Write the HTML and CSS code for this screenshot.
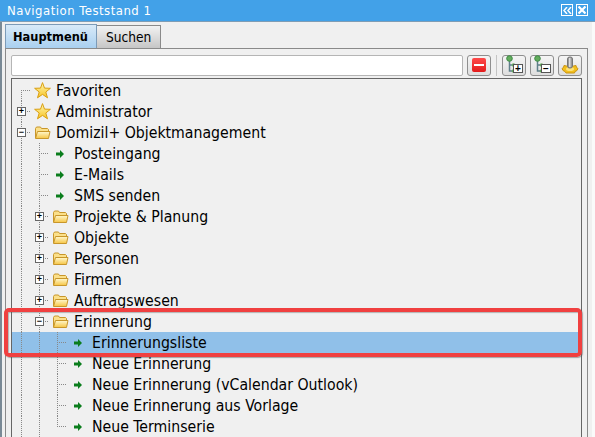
FILE: index.html
```html
<!DOCTYPE html>
<html lang="de">
<head>
    <meta charset="UTF-8">
    <title>Navigation Teststand 1</title>
    <link rel="stylesheet" href="styles.css">
</head>
<body>
    <svg class="defs" width="0" height="0">
        <defs>
            <linearGradient id="star-fill" x1="0" y1="0" x2="0" y2="1">
                <stop offset="0" stop-color="#fff6b0"/>
                <stop offset="1" stop-color="#f7c425"/>
            </linearGradient>
            <linearGradient id="folder-fill" x1="0" y1="0" x2="0" y2="1">
                <stop offset="0" stop-color="#fff8cf"/>
                <stop offset="1" stop-color="#f6c544"/>
            </linearGradient>
            <symbol id="star" viewBox="0 0 17 17">
                <path d="M8.5.6l2 5.500 5.900.2-4.600 3.700 1.700 5.800-5-3.400-5 3.400 1.700-5.800L.6 6.300l5.900-.2z" fill="url(#star-fill)" stroke="#d99f12"/>
            </symbol>
            <symbol id="folder" viewBox="0 0 17 15">
                <path d="M1.500 13V3.500l1-1.500h4l1 1.500h6l1 1V6" fill="#fbe08a" stroke="#c8962a"/>
                <path d="M1.500 13.500L3.500 6.500h12.500l-1.500 7z" fill="url(#folder-fill)" stroke="#c8962a"/>
            </symbol>
            <symbol id="arrow" viewBox="0 0 8 8">
                <path d="M0 2.500h4V0l4 4-4 4V5.500H0z" fill="#0a7d1c"/>
            </symbol>
            <symbol id="branch" viewBox="0 0 22 20">
                <path d="M6.500 5v11h4M6.500 10h4" fill="none" stroke="#5f7f8a" stroke-width="1.500"/>
                <circle cx="6.500" cy="3.500" r="2.800" fill="#63ad5d" stroke="#3e8a45"/>
                <circle cx="10.500" cy="10" r="1.800" fill="#63ad5d"/>
                <circle cx="10.500" cy="16" r="1.800" fill="#63ad5d"/>
            </symbol>
        </defs>
    </svg>

    <div class="window">
        <div class="titlebar">
            <span class="title">Navigation Teststand 1</span>
            <span class="title-btns">
                <span class="title-btn">
                    <svg width="9" height="7" viewBox="0 0 9 7"><path d="M4 0L1 3.500 4 7M8 0L5 3.500 8 7" fill="none" stroke="#fff" stroke-width="1.500"/></svg>
                </span>
                <span class="title-btn">
                    <svg width="8" height="8" viewBox="0 0 8 8"><path d="M.5.500l7 7M7.500.500l-7 7" fill="none" stroke="#fff" stroke-width="2.200"/></svg>
                </span>
            </span>
        </div>

        <div class="tabs">
            <div class="tab active">Hauptmenü</div>
            <div class="tab">Suchen</div>
        </div>

        <div class="panel">
            <div class="toolbar">
                <input class="search" type="text">
                <button class="tool">
                    <span class="red-minus"></span>
                </button>
                <span class="tool-sep"></span>
                <button class="tool">
                    <svg class="branch" width="22" height="20"><use href="#branch"/></svg>
                    <span class="mini-box">+</span>
                </button>
                <button class="tool">
                    <svg class="branch" width="22" height="20"><use href="#branch"/></svg>
                    <span class="mini-box">−</span>
                </button>
                <button class="tool">
                    <svg width="18" height="18" viewBox="0 0 18 18">
                        <path d="M1 12.500l1.500-1 .5-2 2.500.5L9 8.500l3.500 1.500 2.500-.5.5 2 1.500 1-1 2-2 1-.5 1.500H5l-1-1.500-2-1z" fill="#f3bf1c" stroke="#c99413"/>
                        <ellipse cx="9" cy="13" rx="4" ry="2" fill="#fbe27a"/>
                        <rect x="6.500" y="1" width="5" height="11" rx="2" fill="#9a9a9a" stroke="#777"/>
                        <rect x="8" y="2" width="1.500" height="9" fill="#ddd"/>
                    </svg>
                </button>
            </div>

            <div class="tree">
                <div class="row">
                    <span class="conn first"></span>
                    <svg class="star" width="17" height="17"><use href="#star"/></svg>
                    <span class="label">Favoriten</span>
                </div>
                <div class="row">
                    <span class="conn"><span class="exp">+</span></span>
                    <svg class="star" width="17" height="17"><use href="#star"/></svg>
                    <span class="label">Administrator</span>
                </div>
                <div class="row">
                    <span class="conn"><span class="exp">−</span></span>
                    <svg class="folder" width="17" height="15"><use href="#folder"/></svg>
                    <span class="label">Domizil+ Objektmanagement</span>
                </div>
                <div class="row">
                    <span class="ind"></span><span class="conn leaf"></span>
                    <svg class="arrow" width="8" height="8"><use href="#arrow"/></svg>
                    <span class="label">Posteingang</span>
                </div>
                <div class="row">
                    <span class="ind"></span><span class="conn leaf"></span>
                    <svg class="arrow" width="8" height="8"><use href="#arrow"/></svg>
                    <span class="label">E-Mails</span>
                </div>
                <div class="row">
                    <span class="ind"></span><span class="conn leaf"></span>
                    <svg class="arrow" width="8" height="8"><use href="#arrow"/></svg>
                    <span class="label">SMS senden</span>
                </div>
                <div class="row">
                    <span class="ind"></span><span class="conn"><span class="exp">+</span></span>
                    <svg class="folder" width="17" height="15"><use href="#folder"/></svg>
                    <span class="label">Projekte &amp; Planung</span>
                </div>
                <div class="row">
                    <span class="ind"></span><span class="conn"><span class="exp">+</span></span>
                    <svg class="folder" width="17" height="15"><use href="#folder"/></svg>
                    <span class="label">Objekte</span>
                </div>
                <div class="row">
                    <span class="ind"></span><span class="conn"><span class="exp">+</span></span>
                    <svg class="folder" width="17" height="15"><use href="#folder"/></svg>
                    <span class="label">Personen</span>
                </div>
                <div class="row">
                    <span class="ind"></span><span class="conn"><span class="exp">+</span></span>
                    <svg class="folder" width="17" height="15"><use href="#folder"/></svg>
                    <span class="label">Firmen</span>
                </div>
                <div class="row">
                    <span class="ind"></span><span class="conn"><span class="exp">+</span></span>
                    <svg class="folder" width="17" height="15"><use href="#folder"/></svg>
                    <span class="label">Auftragswesen</span>
                </div>
                <div class="row">
                    <span class="ind"></span><span class="conn"><span class="exp">−</span></span>
                    <svg class="folder" width="17" height="15"><use href="#folder"/></svg>
                    <span class="label">Erinnerung</span>
                </div>
                <div class="row selected">
                    <span class="ind"></span><span class="ind"></span><span class="conn leaf"></span>
                    <svg class="arrow" width="8" height="8"><use href="#arrow"/></svg>
                    <span class="label">Erinnerungsliste</span>
                </div>
                <div class="row">
                    <span class="ind"></span><span class="ind"></span><span class="conn leaf"></span>
                    <svg class="arrow" width="8" height="8"><use href="#arrow"/></svg>
                    <span class="label">Neue Erinnerung</span>
                </div>
                <div class="row">
                    <span class="ind"></span><span class="ind"></span><span class="conn leaf"></span>
                    <svg class="arrow" width="8" height="8"><use href="#arrow"/></svg>
                    <span class="label">Neue Erinnerung (vCalendar Outlook)</span>
                </div>
                <div class="row">
                    <span class="ind"></span><span class="ind"></span><span class="conn leaf"></span>
                    <svg class="arrow" width="8" height="8"><use href="#arrow"/></svg>
                    <span class="label">Neue Erinnerung aus Vorlage</span>
                </div>
                <div class="row">
                    <span class="ind"></span><span class="ind"></span><span class="conn leaf last"></span>
                    <svg class="arrow" width="8" height="8"><use href="#arrow"/></svg>
                    <span class="label">Neue Terminserie</span>
                </div>
            </div>
        </div>

        <div class="callout"></div>
    </div>
</body>
</html>
```

FILE: styles.css
```css
html, body {
    margin: 0;
    height: 100%;
    overflow: hidden;
}
body {
    background-color: #f0f0f0;
    color: #000;
    font-family: "DejaVu Sans Condensed", "DejaVu Sans", sans-serif;
    font-stretch: condensed;
}
.defs {
    position: absolute;
}
.window {
    position: relative;
    height: 437px;
    border-left: 2px solid #7a8a96;
    border-right: 3px solid #fafafa;
    box-sizing: border-box;
}
.titlebar {
    display: flex;
    align-items: center;
    justify-content: space-between;
    height: 22px;
    margin: 0 -3px 0 -2px;
    padding: 0 7px 1px 7px;
    box-sizing: border-box;
    background-color: #42a1e8;
    border-bottom: 1px solid #7f9db5;
    color: #fff;
}
.title {
    font-size: 13px;
    letter-spacing: 0.5px;
}
.title-btns {
    display: flex;
    gap: 3px;
}
.title-btn {
    display: flex;
    align-items: center;
    justify-content: center;
    width: 10px;
    height: 10px;
    border: 1px solid #fff;
}
.tabs {
    display: flex;
    align-items: flex-end;
    height: 26px;
    margin-left: 3px;
}
.tab {
    height: 22px;
    padding: 0 9px;
    line-height: 22px;
    font-size: 13.6px;
    border: 1px solid #8a8a8a;
    border-bottom: 0;
    border-left: 0;
    background: linear-gradient(#f2f2f2, #c6c6c6);
}
.tab.active {
    height: 23px;
    padding: 0 8px 0 7px;
    line-height: 23px;
    font-size: 12.7px;
    font-weight: bold;
    border-color: #7c9bb8;
    border-left: 1px solid #7c9bb8;
    background: linear-gradient(#d9eaf8, #a9d0f0);
}
.panel {
    margin-left: 3px;
    width: 583px;
    height: 389px;
    box-sizing: border-box;
    padding: 5px 5px 0 5px;
    border: 1px solid #8a8a8a;
    border-bottom: 0;
    display: flex;
    flex-direction: column;
}
.toolbar {
    display: flex;
    align-items: center;
    gap: 4px;
    height: 22px;
}
.search {
    width: 452px;
    height: 21px;
    padding: 0;
    box-sizing: border-box;
    background-color: #fff;
    border: 1px solid #b5b5b5;
    border-radius: 2px;
    outline: none;
}
.tool {
    position: relative;
    display: flex;
    align-items: center;
    justify-content: center;
    width: 24px;
    height: 21px;
    padding: 0;
    box-sizing: border-box;
    border: 1px solid #8f8f8f;
    border-radius: 3px;
    background: linear-gradient(#f5f5f5, #dedede);
}
.tool-sep {
    width: 1px;
    height: 21px;
    margin: 0 0 0 1px;
    background-color: #c4c4c4;
}
.tool-sep + .tool {
    margin-left: 1px;
}
.red-minus {
    display: block;
    width: 14px;
    height: 14px;
    border-radius: 2px;
    background: linear-gradient(#ff4a4a, #e21b1b);
    position: relative;
}
.red-minus::after {
    content: "";
    position: absolute;
    left: 2px;
    right: 2px;
    top: 6px;
    height: 2px;
    background-color: #fff;
}
.branch {
    margin: -1px 0 0 -1px;
}
.mini-box {
    position: absolute;
    right: 2px;
    bottom: 2px;
    width: 10px;
    height: 9px;
    box-sizing: border-box;
    border: 1px solid #555;
    background-color: #fff;
    color: #000;
    font: bold 10px/7px "Liberation Sans", sans-serif;
    text-align: center;
}
.tree {
    flex: 1;
    border: 1px solid #666;
    border-bottom: 0;
    padding-top: 1px;
    overflow: hidden;
    margin-top: 2px;
}
.row {
    display: flex;
    align-items: center;
    height: 21px;
    padding-left: 1px;
    font-size: 15.7px;
    white-space: nowrap;
}
.row.selected {
    background-color: #90c0e9;
}
.ind {
    align-self: stretch;
    width: 18px;
    background: repeating-linear-gradient(#888 0 1px, transparent 1px 2px) 8px 0 / 1px 100% no-repeat;
}
.conn {
    position: relative;
    align-self: stretch;
    display: flex;
    align-items: center;
    width: 18px;
    flex: none;
    background:
        repeating-linear-gradient(#888 0 1px, transparent 1px 2px) 8px 0 / 1px 100% no-repeat,
        repeating-linear-gradient(90deg, #888 0 1px, transparent 1px 2px) 8px 10px / 10px 1px no-repeat;
}
.conn.first {
    background:
        repeating-linear-gradient(#888 0 1px, transparent 1px 2px) 8px 10px / 1px 11px no-repeat,
        repeating-linear-gradient(90deg, #888 0 1px, transparent 1px 2px) 8px 10px / 10px 1px no-repeat;
}
.conn.last {
    background:
        repeating-linear-gradient(#888 0 1px, transparent 1px 2px) 8px 0 / 1px 11px no-repeat,
        repeating-linear-gradient(90deg, #888 0 1px, transparent 1px 2px) 8px 10px / 10px 1px no-repeat;
}
.exp {
    display: block;
    width: 9px;
    height: 9px;
    margin-left: 4px;
    box-sizing: border-box;
    border: 1px solid #666;
    background-color: #fff;
    font: bold 9px/7px "Liberation Sans", sans-serif;
    text-align: center;
}
.star, .folder {
    flex: none;
    margin-left: 3px;
}
.arrow {
    flex: none;
    margin-left: 7px;
}
.label {
    margin-left: 5px;
}
.arrow + .label {
    margin-left: 10px;
}
.callout {
    position: absolute;
    left: 2px;
    top: 308px;
    width: 578px;
    height: 49px;
    box-sizing: border-box;
    border: 4px solid #f04040;
    border-radius: 5px;
    box-shadow: 1px 1px 1px rgba(90, 90, 90, 0.5), inset 1px 1px 1px rgba(90, 90, 90, 0.4);
}
```
